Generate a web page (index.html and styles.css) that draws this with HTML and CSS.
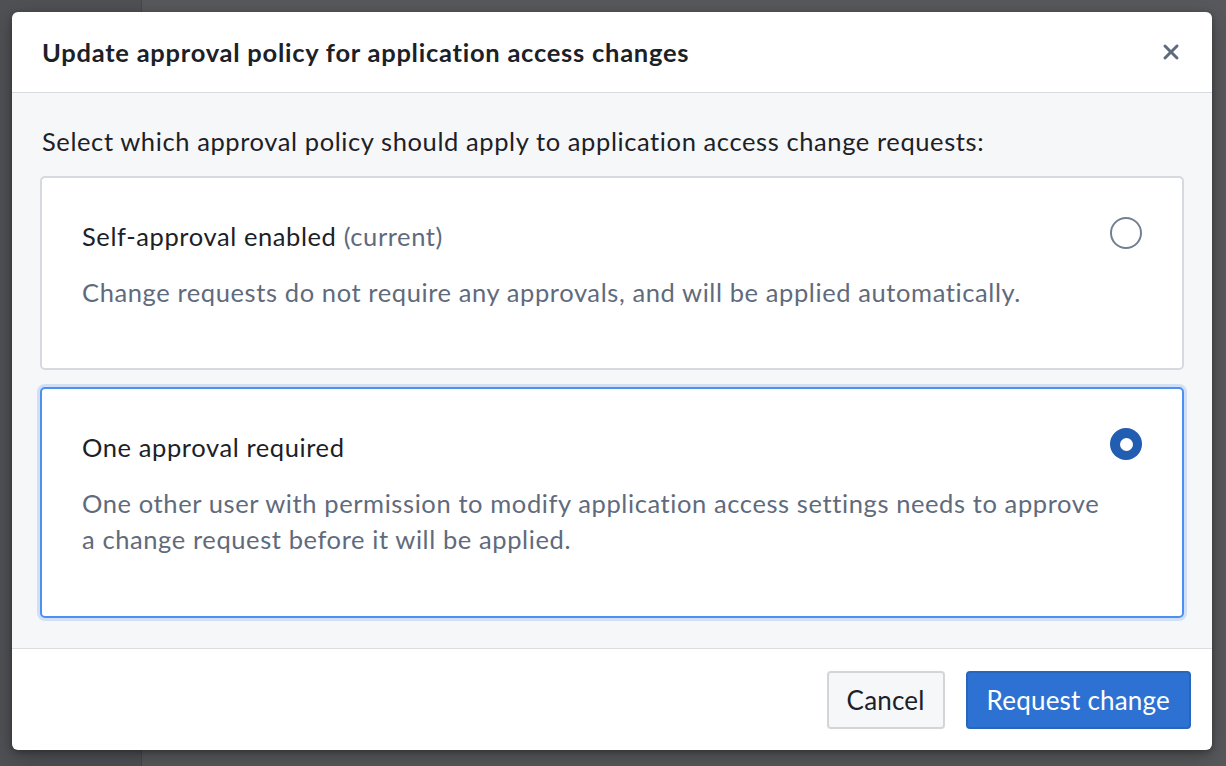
FILE: index.html
```html
<!DOCTYPE html>
<html lang="en">
<head>
<meta charset="utf-8">
<title>Update approval policy</title>
<link rel="stylesheet" href="styles.css">
</head>
<body>
<div class="backdrop">
  <div class="sidebar"></div>
  <div class="main"></div>
</div>
<div class="overlay">
  <div class="dialog" role="dialog">
    <div class="dialog-header">
      <h1 class="dialog-title">Update approval policy for application access changes</h1>
      <button class="close-btn" aria-label="Close">
        <svg width="24" height="24" viewBox="0 0 16 16"><path fill="#5f6b7c" d="M9.41 8l3.29-3.29c.19-.18.3-.43.3-.71a1.003 1.003 0 00-1.71-.71L8 6.590l-3.29-3.3a1.003 1.003 0 00-1.42 1.42L6.59 8 3.3 11.29c-.19.18-.3.43-.3.71a1.003 1.003 0 001.710.71L8 9.41l3.29 3.29c.18.19.43.3.71.3a1.003 1.003 0 00.71-1.71L9.41 8z"/></svg>
      </button>
    </div>
    <div class="dialog-body">
      <p class="intro">Select which approval policy should apply to application access change requests:</p>
      <div class="option">
        <div class="option-text">
          <div class="option-title">Self-approval enabled <span class="muted">(current)</span></div>
          <div class="option-desc">Change requests do not require any approvals, and will be applied automatically.</div>
        </div>
        <span class="radio"></span>
      </div>
      <div class="option selected">
        <div class="option-text">
          <div class="option-title">One approval required</div>
          <div class="option-desc">One other user with permission to modify application access settings needs to approve<br>a change request before it will be applied.</div>
        </div>
        <span class="radio checked"></span>
      </div>
    </div>
    <div class="dialog-footer">
      <button class="btn">Cancel</button>
      <button class="btn primary">Request change</button>
    </div>
  </div>
</div>
</body>
</html>
```
FILE: styles.css
```css
* { box-sizing: border-box; }
html, body { margin: 0; padding: 0; }
body {
  width: 1226px;
  height: 766px;
  overflow: hidden;
  font-family: "Lato", "Noto Sans", sans-serif;
  background: #57585b;
  position: relative;
}
.backdrop {
  display: flex;
  height: 766px;
}
.sidebar {
  width: 142px;
  background: #4f5155;
  border-right: 1px solid #46484b;
}
.main {
  flex: 1;
  background: #58595c;
}
.overlay {
  position: absolute;
  inset: 0;
  padding: 12px 14px 16px 12px;
}
.dialog {
  width: 1200px;
  height: 738px;
  background: #fff;
  border-radius: 6px;
  box-shadow: 0 2px 6px rgba(0,0,0,0.3), 0 8px 24px rgba(0,0,0,0.25);
  display: flex;
  flex-direction: column;
  overflow: hidden;
}
.dialog-header {
  height: 81px;
  flex: none;
  display: flex;
  align-items: center;
  padding: 0 29px 0 30px;
  border-bottom: 1px solid #d9dadd;
}
.dialog-title {
  flex: 1;
  margin: 0;
  font-size: 25.5px;
  font-weight: 700;
  color: #1c2127;
  letter-spacing: 0.75px;
}
.close-btn {
  border: 0;
  background: none;
  padding: 0;
  width: 24px;
  height: 24px;
  display: flex;
}
.dialog-body {
  flex: none;
  height: 556px;
  background: #f6f7f9;
  padding: 28px 28px 0 28px;
  display: flex;
  flex-direction: column;
  gap: 17px;
  border-bottom: 1px solid #dcdde0;
}
.intro {
  margin: 0 0 -2px 2px;
  font-size: 25.5px;
  letter-spacing: 0.6px;
  line-height: 40px;
  color: #1c2127;
}
.option {
  flex: none;
  background: #fff;
  border: 2px solid #d6d9dd;
  border-radius: 5px;
  padding: 38px 40px 58px 40px;
  display: flex;
  gap: 8px;
}
.option:first-of-type { height: 194px; }
.option.selected {
  height: 231px;
  border-color: #4c90f0;
  box-shadow: 0 0 0 3px rgba(76,144,240,0.22);
}
.option-text { flex: 1; min-width: 0; }
.option-title {
  font-size: 25.5px;
  letter-spacing: 0.6px;
  line-height: 40px;
  color: #1c2127;
}
.muted { color: #5f6b7c; }
.option-desc {
  margin-top: 18px;
  font-size: 25.5px;
  letter-spacing: 0.6px;
  line-height: 36px;
  color: #5f6b7c;
  white-space: nowrap;
}
.radio {
  flex: none;
  width: 32px;
  height: 32px;
  margin-top: 1px;
  border-radius: 50%;
  border: 2px solid #738091;
  background: #fff;
  display: flex;
  align-items: center;
  justify-content: center;
}
.radio.checked {
  border: 0;
  background: #215db0;
}
.radio.checked::after {
  content: "";
  width: 13px;
  height: 13px;
  border-radius: 50%;
  background: #fff;
}
.dialog-footer {
  flex: 1;
  display: flex;
  justify-content: flex-end;
  align-items: flex-start;
  gap: 21px;
  padding: 22px 21px 0 0;
}
.btn {
  height: 58px;
  padding: 0 18px;
  border-radius: 4px;
  font-family: inherit;
  font-size: 26px;
  letter-spacing: 0.2px;
  color: #1c2127;
  background: #f6f7f9;
  border: 2px solid #d3d5d8;
  cursor: pointer;
}
.btn.primary {
  padding: 0 19px;
  background: #2d72d2;
  border-color: #2866bd;
  color: #fff;
}
```
